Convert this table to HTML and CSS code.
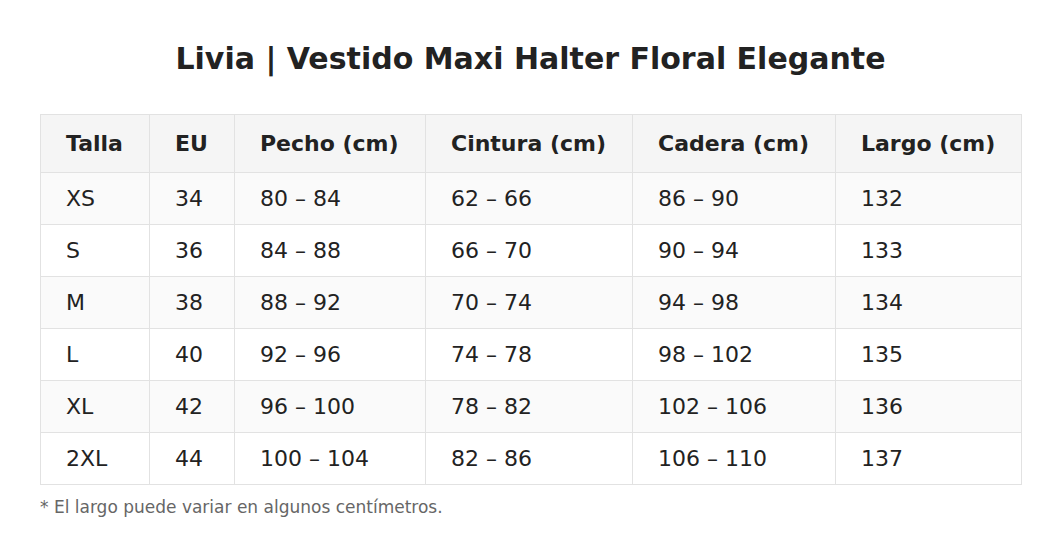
FILE: index.html
```html
<!DOCTYPE html>
<html lang="es">
<head>
<meta charset="utf-8">
<title>Livia | Vestido Maxi Halter Floral Elegante</title>
<link rel="stylesheet" href="styles.css">
</head>
<body>
<main class="page">
  <h1 class="title">Livia | Vestido Maxi Halter Floral Elegante</h1>
  <table class="sizes">
    <colgroup>
      <col class="c1"><col class="c2"><col class="c3"><col class="c4"><col class="c5"><col class="c6">
    </colgroup>
    <thead>
      <tr><th>Talla</th><th>EU</th><th>Pecho (cm)</th><th>Cintura (cm)</th><th>Cadera (cm)</th><th>Largo (cm)</th></tr>
    </thead>
    <tbody>
      <tr><td>XS</td><td>34</td><td>80 – 84</td><td>62 – 66</td><td>86 – 90</td><td>132</td></tr>
      <tr><td>S</td><td>36</td><td>84 – 88</td><td>66 – 70</td><td>90 – 94</td><td>133</td></tr>
      <tr><td>M</td><td>38</td><td>88 – 92</td><td>70 – 74</td><td>94 – 98</td><td>134</td></tr>
      <tr><td>L</td><td>40</td><td>92 – 96</td><td>74 – 78</td><td>98 – 102</td><td>135</td></tr>
      <tr><td>XL</td><td>42</td><td>96 – 100</td><td>78 – 82</td><td>102 – 106</td><td>136</td></tr>
      <tr><td>2XL</td><td>44</td><td>100 – 104</td><td>82 – 86</td><td>106 – 110</td><td>137</td></tr>
    </tbody>
  </table>
  <p class="note">* El largo puede variar en algunos centímetros.</p>
</main>
</body>
</html>
```
FILE: styles.css
```css
html, body {
  margin: 0;
  padding: 0;
  background: #ffffff;
}
body {
  font-family: "DejaVu Sans", "Liberation Sans", sans-serif;
  color: #222222;
}
.page {
  padding: 40px 40px 0;
}
.title {
  margin: 0 0 36px;
  font-size: 30px;
  line-height: 38px;
  font-weight: bold;
  text-align: center;
  color: #222222;
}
.sizes {
  width: 981px;
  border-collapse: collapse;
  table-layout: fixed;
  font-size: 22px;
}
.c1 { width: 109px; }
.c2 { width: 85px; }
.c3 { width: 191px; }
.c4 { width: 207px; }
.c5 { width: 203px; }
.c6 { width: 186px; }
.sizes th,
.sizes td {
  border: 1px solid #e2e2e2;
  text-align: left;
  padding: 0 25px;
  white-space: nowrap;
}
.sizes th {
  height: 57px;
  background: #f5f5f5;
  font-weight: bold;
}
.sizes td {
  height: 51px;
}
.sizes tbody tr:nth-child(odd) td {
  background: #fafafa;
}
.sizes tbody tr:nth-child(even) td {
  background: #ffffff;
}
.note {
  margin: 12px 0 0;
  font-size: 17px;
  line-height: 20px;
  color: #666666;
}
```
